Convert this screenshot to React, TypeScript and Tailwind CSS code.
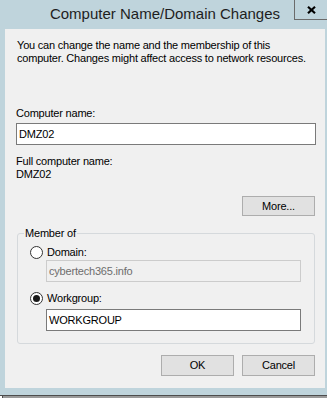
import React from 'react';

const FONT = { fontFamily: '"Liberation Sans", Arial, sans-serif' };

function TextBox({ value, disabled }: { value: string; disabled?: boolean }) {
  return (
    <div
      className={`h-[22px] border pl-[2px] leading-[20px] whitespace-nowrap ${
        disabled ? 'border-[#cccccc] bg-[#f0f0f0] text-[#6d6d6d]' : 'border-[#7a7a7a] bg-white text-black'
      }`}
    >
      {value}
    </div>
  );
}

function Radio({ checked, label }: { checked?: boolean; label: string }) {
  return (
    <div className="flex h-[13px] items-center">
      <span className="ml-[12px] flex h-[13px] w-[13px] items-center justify-center rounded-full border border-[#333333] bg-white">
        {checked && <span className="h-[7px] w-[7px] rounded-full bg-[#1a1a1a]" />}
      </span>
      <span className="ml-[4px]">{label}</span>
    </div>
  );
}

function Button({ children }: { children: React.ReactNode }) {
  return (
    <div className="flex h-[21px] w-[73px] items-center justify-center border border-[#adadad] bg-[#e1e1e1]">
      {children}
    </div>
  );
}

export default function App() {
  return (
    <div className="flex h-[398px] w-[327px] flex-col bg-[#bfd4dc] text-black" style={FONT}>
      {/* title bar */}
      <div className="flex h-[29px] items-start">
        <div className="flex-1 pl-[36px] pt-[5px] text-center text-[15px] leading-[18px] text-[#1e1e1e]">
          Computer Name/Domain Changes
        </div>
        <div className="flex h-[20px] w-[33px] items-center justify-center border-b border-l border-[#6b6b6b]">
          <svg width="9" height="8" viewBox="0 0 9 8">
            <path d="M1 0.8 L8 7.2 M8 0.8 L1 7.2" stroke="#000" strokeWidth="2.2" />
          </svg>
        </div>
      </div>

      {/* dialog body */}
      <div className="ml-[5px] h-[359px] w-[320px] bg-[#f0f0f0] pl-[11px] pr-[9px] pt-[10px] text-[11px] leading-[13px] tracking-[-0.2px]">
        <p className="pl-[1px]">
          You can change the name and the membership of this
          <br />
          computer. Changes might affect access to network resources.
        </p>

        <div className="mt-[42px]">Computer name:</div>
        <div className="mt-[3px]">
          <TextBox value="DMZ02" />
        </div>

        <div className="mt-[10px]">Full computer name:</div>
        <div>DMZ02</div>

        <div className="mt-[15px] flex justify-end pr-[1px]">
          <div className="flex h-[20px] w-[73px] items-center justify-center border border-[#adadad] bg-[#e1e1e1]">
            More...
          </div>
        </div>

        <div className="relative ml-[1px] mr-[1px] mt-[17px] rounded-[3px] border border-[#d5d9dc] pb-[12px] pt-[12px]">
          <span className="absolute -top-[7px] left-[6px] bg-[#f0f0f0] px-[1px]">Member of</span>
          <Radio label="Domain:" />
          <div className="ml-[28px] mr-[13px] mt-[1px]">
            <TextBox value="cybertech365.info" disabled />
          </div>
          <div className="mt-[10px]">
            <Radio checked label="Workgroup:" />
          </div>
          <div className="ml-[28px] mr-[13px] mt-[4px]">
            <TextBox value="WORKGROUP" />
          </div>
        </div>

        <div className="mt-[11px] flex justify-end gap-[8px] pr-[1px]">
          <Button>OK</Button>
          <Button>Cancel</Button>
        </div>
      </div>

      <div className="h-[7px]" />
      <div className="flex h-[3px] border-t border-[#4d4d4d] bg-[#9a9a9a]">
        <div className="w-[3px] border-r border-[#4d4d4d] bg-white" />
      </div>
    </div>
  );
}
